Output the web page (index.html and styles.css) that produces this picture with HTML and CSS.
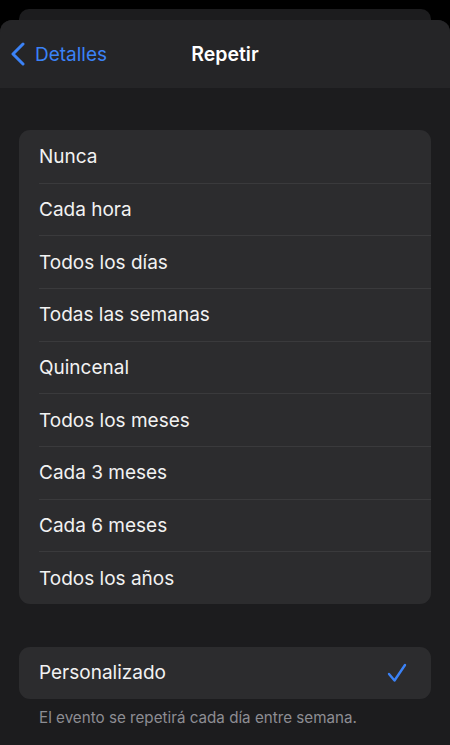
FILE: index.html
```html
<!DOCTYPE html>
<html lang="es">
<head>
<meta charset="utf-8">
<title>Repetir</title>
<link rel="stylesheet" href="styles.css">
</head>
<body>
<div class="back-card"></div>
<div class="sheet">
  <header class="nav">
    <div class="back">
      <svg class="chev" width="16" height="24" viewBox="0 0 16 24"><path d="M13 2 L3 12 L13 22" fill="none" stroke="#3b82f6" stroke-width="3" stroke-linecap="round" stroke-linejoin="round"/></svg>
      <span>Detalles</span>
    </div>
    <div class="title">Repetir</div>
  </header>
  <main class="content">
    <ul class="group">
      <li class="row">Nunca</li>
      <li class="row">Cada hora</li>
      <li class="row">Todos los días</li>
      <li class="row">Todas las semanas</li>
      <li class="row">Quincenal</li>
      <li class="row">Todos los meses</li>
      <li class="row">Cada 3 meses</li>
      <li class="row">Cada 6 meses</li>
      <li class="row">Todos los años</li>
    </ul>
    <ul class="group group2">
      <li class="row sel">Personalizado
        <svg class="check" width="20" height="20" viewBox="0 0 20 20"><path d="M2 11 L7.5 17.5 L18 2" fill="none" stroke="#3b82f6" stroke-width="2.4" stroke-linecap="round" stroke-linejoin="round"/></svg>
      </li>
    </ul>
    <p class="foot">El evento se repetirá cada día entre semana.</p>
  </main>
</div>
</body>
</html>
```
FILE: styles.css
```css
html, body {
  margin: 0;
  padding: 0;
  background: #000;
  font-family: Inter, "Liberation Sans", sans-serif;
  -webkit-font-smoothing: antialiased;
}
.back-card {
  height: 12px;
  margin: 9px 19px 0;
  background: #1c1c1e;
  border-radius: 10px 10px 0 0;
}
.sheet {
  margin-top: -1px;
  background: #1c1c1e;
  border-radius: 12px 12px 0 0;
  overflow: hidden;
  height: 725px;
}
.nav {
  height: 68px;
  background: #252527;
  display: grid;
  grid-template-columns: 1fr;
  align-items: center;
  position: relative;
}
.back {
  position: absolute;
  left: 10px;
  top: 22px;
  display: flex;
  align-items: center;
  gap: 9px;
  color: #3b82f6;
  font-size: 19px;
}
.title {
  text-align: center;
  color: #fff;
  font-size: 19.5px;
  font-weight: 600;
}
.content {
  padding: 42px 19px 0;
}
.group {
  list-style: none;
  margin: 0;
  padding: 0;
  background: #2c2c2e;
  border-radius: 11px;
  overflow: hidden;
}
.row {
  height: 52.67px;
  display: flex;
  align-items: center;
  margin-left: 20px;
  color: #f2f2f2;
  font-size: 19px;
  box-sizing: border-box;
  border-top: 1px solid #3a3a3c;
}
.row:first-child {
  border-top: none;
}
.group2 {
  margin-top: 43px;
}
.group2 .row {
  height: 52px;
  justify-content: space-between;
  padding-right: 24px;
}
.check {
  display: block;
}
.foot {
  margin: 9px 0 0 20px;
  color: #8d8d93;
  font-size: 15.2px;
}
```
